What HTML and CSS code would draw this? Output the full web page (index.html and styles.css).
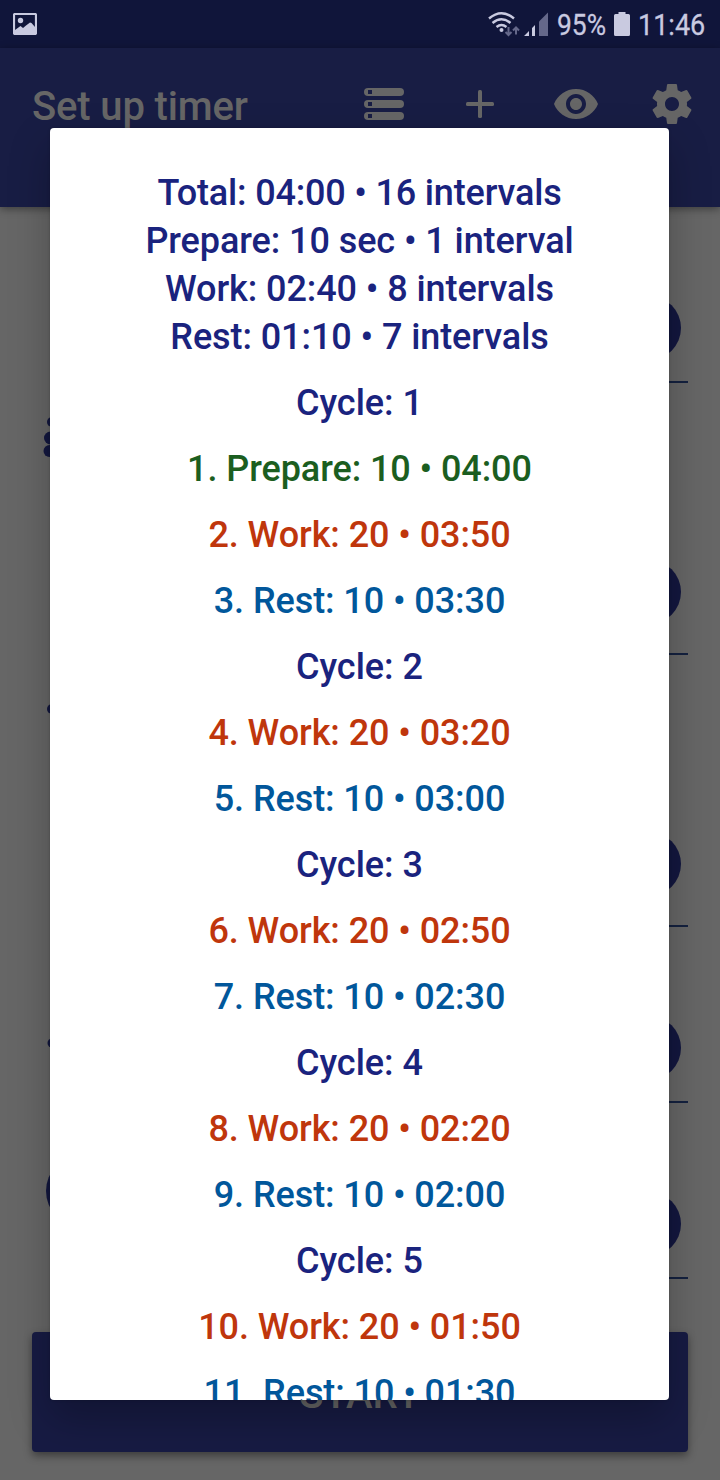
FILE: index.html
```html
<!DOCTYPE html>
<html lang="en">
<head>
    <meta charset="UTF-8">
    <meta name="viewport" content="width=device-width, initial-scale=1.0">
    <title>Set up timer</title>
    <link rel="stylesheet" href="styles.css">
</head>
<body>

    <!-- Status bar -->
    <div class="status-bar">
        <svg class="picture-icon" width="24" height="22" viewBox="0 0 24 22">
            <rect x="1" y="1" width="22" height="20" rx="1" fill="none" stroke="#c9cae0" stroke-width="2.200"/>
            <circle cx="7.500" cy="7.500" r="2.700" fill="#c9cae0"/>
            <path d="M2 17L7.500 13L10 15L13 12.500L17 9.500L18.500 10L22 14V21H2Z" fill="#c9cae0"/>
        </svg>
        <div class="status-right">
            <svg width="62" height="26" viewBox="0 0 62 26">
                <g fill="none" stroke="#c9cae0" stroke-width="2.400">
                    <path d="M1 6.500Q13.500 -4 26 6.500"/>
                    <path d="M4.500 11Q13.500 3.500 22.500 11"/>
                    <path d="M8.500 15Q13.500 11 18.500 15"/>
                </g>
                <circle cx="13.500" cy="18" r="2" fill="#c9cae0"/>
                <path d="M20.500 15V23M17.500 20L20.500 23L23.500 20M28 22.500V15.500M25 18.500L28 15.500L31 18.500" fill="none" stroke="#65688a" stroke-width="2"/>
                <path d="M36 24L41 19V24ZM44 24V16L47 13V24Z" fill="#c9cae0"/>
                <path d="M51 24V9.500L60 0.500V24Z" fill="#65688a"/>
            </svg>
            <span class="battery-level">95%</span>
            <svg class="battery-icon" width="16" height="24" viewBox="0 0 16 24">
                <path d="M4.500 0H11.500V2H14.500Q16 2 16 3.500V22.500Q16 24 14.500 24H1.500Q0 24 0 22.500V3.500Q0 2 1.500 2H4.500Z" fill="#c9cae0"/>
            </svg>
            <span class="clock">11:46</span>
        </div>
    </div>

    <!-- Toolbar -->
    <header class="app-bar">
        <h1>Set up timer</h1>
        <nav class="actions">
            <svg viewBox="0 0 48 48">
                <rect x="4" y="8" width="40" height="8" rx="4"/>
                <rect x="4" y="20" width="40" height="8" rx="4"/>
                <rect x="4" y="32" width="40" height="8" rx="4"/>
                <path class="hole" d="M8 10H12V14H8ZM8 22H12V26H8ZM8 34H12V38H8Z"/>
            </svg>
            <svg viewBox="0 0 48 48">
                <rect x="22" y="10" width="4" height="28" rx="1.500"/>
                <rect x="10" y="22" width="28" height="4" rx="1.500"/>
            </svg>
            <svg viewBox="0 0 24 24">
                <path d="M12 4.500C7 4.500 2.730 7.610 1 12c1.730 4.390 6 7.500 11 7.500s9.270-3.110 11-7.500c-1.730-4.390-6-7.500-11-7.500zM12 17c-2.760 0-5-2.240-5-5s2.240-5 5-5 5 2.240 5 5-2.240 5-5 5zm0-8c-1.660 0-3 1.340-3 3s1.340 3 3 3 3-1.340 3-3-1.340-3-3-3z"/>
            </svg>
            <svg viewBox="0 0 24 24">
                <path d="M19.430 12.980c.04-.32.07-.64.07-.98s-.03-.66-.07-.98l2.110-1.650c.19-.15.24-.42.12-.64l-2-3.460c-.12-.22-.39-.3-.61-.22l-2.490 1c-.52-.4-1.080-.73-1.690-.98l-.38-2.650C14.460 2.180 14.250 2 14 2h-4c-.25 0-.46.18-.49.42l-.38 2.650c-.61.25-1.170.59-1.690.98l-2.490-1c-.23-.09-.49 0-.61.22l-2 3.460c-.13.22-.07.49.12.64l2.110 1.650c-.04.32-.07.65-.07.98s.03.66.07.98l-2.110 1.650c-.19.15-.24.42-.12.64l2 3.460c.12.22.39.3.61.22l2.490-1c.52.4 1.080.73 1.690.98l.38 2.650c.03.24.24.42.49.42h4c.25 0 .46-.18.49-.42l.38-2.650c.61-.25 1.170-.59 1.690-.98l2.490 1c.23.09.49 0 .61-.22l2-3.460c.12-.22.07-.49-.12-.64l-2.110-1.650zM12 15.500c-1.930 0-3.500-1.570-3.500-3.500s1.570-3.500 3.500-3.500 3.500 1.570 3.500 3.500-1.570 3.500-3.500 3.500z"/>
            </svg>
        </nav>
    </header>

    <!-- Timer settings -->
    <main class="settings">
        <div class="setting">
            <span class="round-button"></span>
        </div>
        <div class="setting tall">
            <svg class="setting-icon" viewBox="0 0 20 48">
                <circle cx="11" cy="7" r="5"/>
                <circle cx="9.500" cy="23" r="6.500"/>
                <circle cx="8.500" cy="36" r="6"/>
            </svg>
            <span class="round-button"></span>
        </div>
        <div class="setting tall">
            <svg class="setting-icon" viewBox="0 0 20 48">
                <circle cx="11" cy="22" r="5"/>
            </svg>
            <span class="round-button"></span>
        </div>
        <div class="setting">
            <svg class="setting-icon" viewBox="0 0 20 48">
                <circle cx="11" cy="24" r="4.500"/>
            </svg>
            <span class="round-button"></span>
        </div>
        <div class="setting">
            <span class="clock-icon"></span>
            <span class="round-button"></span>
        </div>
    </main>
    <button class="start-button">START</button>

    <!-- Interval list -->
    <div class="dialog">
        <div class="summary">
            <p class="total">Total: 04:00 • 16 intervals</p>
            <p>Prepare: 10 sec • 1 interval</p>
            <p>Work: 02:40 • 8 intervals</p>
            <p>Rest: 01:10 • 7 intervals</p>
        </div>
        <p class="cycle">Cycle: 1</p>
        <p class="prepare">1. Prepare: 10 • 04:00</p>
        <p class="work">2. Work: 20 • 03:50</p>
        <p class="rest">3. Rest: 10 • 03:30</p>
        <p class="cycle">Cycle: 2</p>
        <p class="work">4. Work: 20 • 03:20</p>
        <p class="rest">5. Rest: 10 • 03:00</p>
        <p class="cycle">Cycle: 3</p>
        <p class="work">6. Work: 20 • 02:50</p>
        <p class="rest">7. Rest: 10 • 02:30</p>
        <p class="cycle">Cycle: 4</p>
        <p class="work">8. Work: 20 • 02:20</p>
        <p class="rest">9. Rest: 10 • 02:00</p>
        <p class="cycle">Cycle: 5</p>
        <p class="work">10. Work: 20 • 01:50</p>
        <p class="rest">11. Rest: 10 • 01:30</p>
    </div>

</body>
</html>
```
FILE: styles.css
```css
* {
    box-sizing: border-box;
}
body {
    font-family: Roboto, "Liberation Sans", sans-serif;
    height: 1480px;
    margin: 0;
    overflow: hidden;
    background-color: #666666;
}
h1, p {
    margin: 0;
    font-weight: 500;
}
.status-bar {
    display: flex;
    justify-content: space-between;
    height: 48px;
    padding: 12px 15px 0 13px;
    background: #10153a;
    color: #c9cae0;
}
.picture-icon {
    margin-top: 1px;
}
.status-right {
    display: flex;
    font-size: 30px;
    line-height: 26px;
    white-space: nowrap;
    -webkit-text-stroke: 0.3px #c9cae0;
}
.battery-level {
    width: 49px;
    margin-left: 7px;
    transform: scaleX(0.88);
    transform-origin: left;
}
.battery-icon {
    margin-left: 8px;
}
.clock {
    width: 67px;
    margin-left: 8px;
    transform: scaleX(0.9);
    transform-origin: left;
}
.app-bar {
    display: flex;
    justify-content: space-between;
    height: 159px;
    padding: 32px 24px 0 32px;
    background: #181d44;
    box-shadow: 0 2px 8px rgba(0, 0, 0, 0.4);
}
.app-bar h1 {
    font-size: 40px;
    line-height: 54px;
    letter-spacing: -0.15px;
    color: #666666;
}
.actions {
    display: flex;
    gap: 48px;
}
.actions svg {
    width: 48px;
    height: 48px;
    fill: #666666;
}
.actions .hole {
    fill: #181d44;
}
.settings {
    padding: 0 32px;
}
.setting {
    display: flex;
    justify-content: flex-end;
    align-items: flex-end;
    height: 176px;
    margin-left: 9px;
    padding: 0 7px 23px 0;
    background: linear-gradient(#14213f, #14213f) right bottom / 300px 2px no-repeat;
}
.setting.tall {
    height: 272px;
    padding-bottom: 31px;
}
.round-button {
    width: 64px;
    height: 64px;
    margin-left: auto;
    border-radius: 50%;
    background: #13173f;
}
.setting-icon {
    align-self: flex-start;
    width: 20px;
    height: 48px;
    margin-top: 32px;
    fill: #13173f;
}
.setting:nth-child(4) .setting-icon {
    margin-top: 92px;
}
.clock-icon {
    width: 72px;
    height: 72px;
    margin: 0 0 29px 5px;
    border-radius: 50%;
    background: #13173f;
}
.start-button {
    display: block;
    width: 656px;
    height: 120px;
    margin: 53px 32px 0;
    padding: 5px 0 0;
    border: none;
    border-radius: 4px;
    background: #171b43;
    box-shadow: 0 4px 8px rgba(0, 0, 0, 0.4);
    font: 500 40px Roboto, "Liberation Sans", sans-serif;
    color: #666666;
}
.dialog {
    position: absolute;
    top: 128px;
    left: 50px;
    width: 619px;
    height: 1272px;
    padding-top: 41px;
    overflow: hidden;
    border-radius: 4px;
    background: white;
    box-shadow: 0 18px 40px rgba(0, 0, 0, 0.25), 0 0 3px rgba(0, 0, 0, 0.2);
    font-size: 36px;
    line-height: 48px;
    letter-spacing: -0.08px;
    text-align: center;
    color: #1a237e;
}
.dialog > p {
    margin-top: 18px;
}
.total {
    letter-spacing: -0.18px;
}
.cycle {
    letter-spacing: 0;
}
.prepare {
    color: #1b5e20;
}
.work {
    color: #bf360c;
}
.rest {
    color: #01579b;
}
```
